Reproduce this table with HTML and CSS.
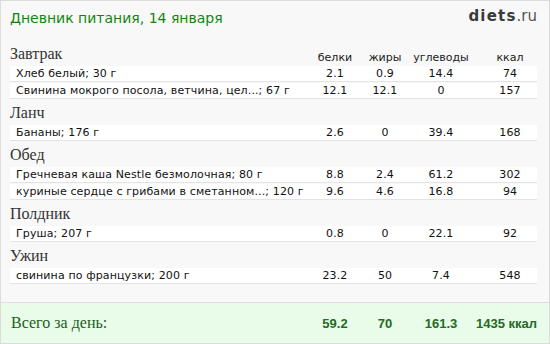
FILE: index.html
```html
<!DOCTYPE html>
<html lang="ru">
<head>
<meta charset="utf-8">
<title>Дневник питания</title>
<link rel="stylesheet" href="styles.css">
</head>
<body>
<div class="page">
  <header class="top">
    <h1 class="title">Дневник питания, 14 января</h1>
    <div class="logo"><span class="logo-b">diets</span>.ru</div>
  </header>

  <section class="meal">
    <div class="head"><span class="meal-name">Завтрак</span><span class="lbl">белки</span><span class="lbl">жиры</span><span class="lbl">углеводы</span><span class="lbl kc">ккал</span></div>
    <div class="row"><span class="name">Хлеб белый; 30 г</span><span class="c">2.1</span><span class="c">0.9</span><span class="c">14.4</span><span class="c kc">74</span></div>
    <div class="row"><span class="name">Свинина мокрого посола, ветчина, цел...; 67 г</span><span class="c">12.1</span><span class="c">12.1</span><span class="c">0</span><span class="c kc">157</span></div>
  </section>

  <section class="meal">
    <div class="head"><span class="meal-name">Ланч</span></div>
    <div class="row"><span class="name">Бананы; 176 г</span><span class="c">2.6</span><span class="c">0</span><span class="c">39.4</span><span class="c kc">168</span></div>
  </section>

  <section class="meal">
    <div class="head"><span class="meal-name">Обед</span></div>
    <div class="row"><span class="name">Гречневая каша Nestle безмолочная; 80 г</span><span class="c">8.8</span><span class="c">2.4</span><span class="c">61.2</span><span class="c kc">302</span></div>
    <div class="row"><span class="name">куриные сердце с грибами в сметанном...; 120 г</span><span class="c">9.6</span><span class="c">4.6</span><span class="c">16.8</span><span class="c kc">94</span></div>
  </section>

  <section class="meal">
    <div class="head"><span class="meal-name">Полдник</span></div>
    <div class="row"><span class="name">Груша; 207 г</span><span class="c">0.8</span><span class="c">0</span><span class="c">22.1</span><span class="c kc">92</span></div>
  </section>

  <section class="meal">
    <div class="head"><span class="meal-name">Ужин</span></div>
    <div class="row"><span class="name">свинина по французки; 200 г</span><span class="c">23.2</span><span class="c">50</span><span class="c">7.4</span><span class="c kc">548</span></div>
  </section>

  <footer class="total">
    <span class="total-name">Всего за день:</span>
    <span class="t">59.2</span>
    <span class="t">70</span>
    <span class="t">161.3</span>
    <span class="t tk">1435 ккал</span>
  </footer>
</div>
</body>
</html>
```

FILE: styles.css
```css
html, body {
  margin: 0;
  padding: 0;
  background: #f8f8f8;
}

.page {
  width: 550px;
  height: 344px;
  box-sizing: border-box;
  border: 1px solid #dcdcdc;
  background: #f8f8f8;
  display: flex;
  flex-direction: column;
  font-family: "DejaVu Sans", Verdana, sans-serif;
  color: #111;
}

.top {
  height: 40px;
  box-sizing: border-box;
  padding: 9px 12px 0 9px;
  display: flex;
  justify-content: space-between;
  align-items: flex-start;
}

.title {
  margin: 0;
  font-weight: normal;
  font-size: 14px;
  line-height: 16px;
  color: #0f870f;
}

.logo {
  font-family: "DejaVu Sans", sans-serif;
  font-size: 15px;
  line-height: 16px;
  color: #555;
  margin-top: -2px;
}

.logo-b {
  font-weight: bold;
  color: #3a3a3a;
  letter-spacing: 1.2px;
}

.meal {
  padding: 0 12px 0 9px;
}

.head,
.row,
.total {
  display: grid;
  grid-template-columns: minmax(0, 1fr) 50px 50px 62px 65px;
}

.head {
  height: 25px;
  box-sizing: border-box;
  align-items: start;
}

.meal-name {
  font-family: "Liberation Serif", "Times New Roman", serif;
  font-size: 16px;
  line-height: 16px;
  padding-top: 5px;
  color: #333;
}

.lbl {
  font-size: 11px;
  line-height: 13px;
  padding-top: 10px;
  text-align: center;
  color: #222;
}

.kc {
  padding-left: 11px;
}

.row {
  height: 15px;
  background: #fff;
  border-bottom: 1px solid #e4e4e4;
  margin-bottom: 1px;
  font-size: 11px;
  line-height: 15px;
  letter-spacing: 0.12px;
}

.name {
  padding-left: 6px;
  white-space: nowrap;
}

.c {
  text-align: center;
}

.total {
  margin-top: auto;
  height: 40px;
  border-top: 1px solid #dedede;
  background: #e9fce9;
  padding: 0 12px 0 9px;
  align-items: center;
}

.total-name {
  font-family: "Liberation Serif", "Times New Roman", serif;
  font-size: 16px;
  color: #1b5e1b;
  padding-left: 1px;
}

.t {
  font-family: "Liberation Sans", Arial, sans-serif;
  font-weight: bold;
  font-size: 13px;
  color: #236a23;
  text-align: center;
}

.tk {
  text-align: right;
}
```
